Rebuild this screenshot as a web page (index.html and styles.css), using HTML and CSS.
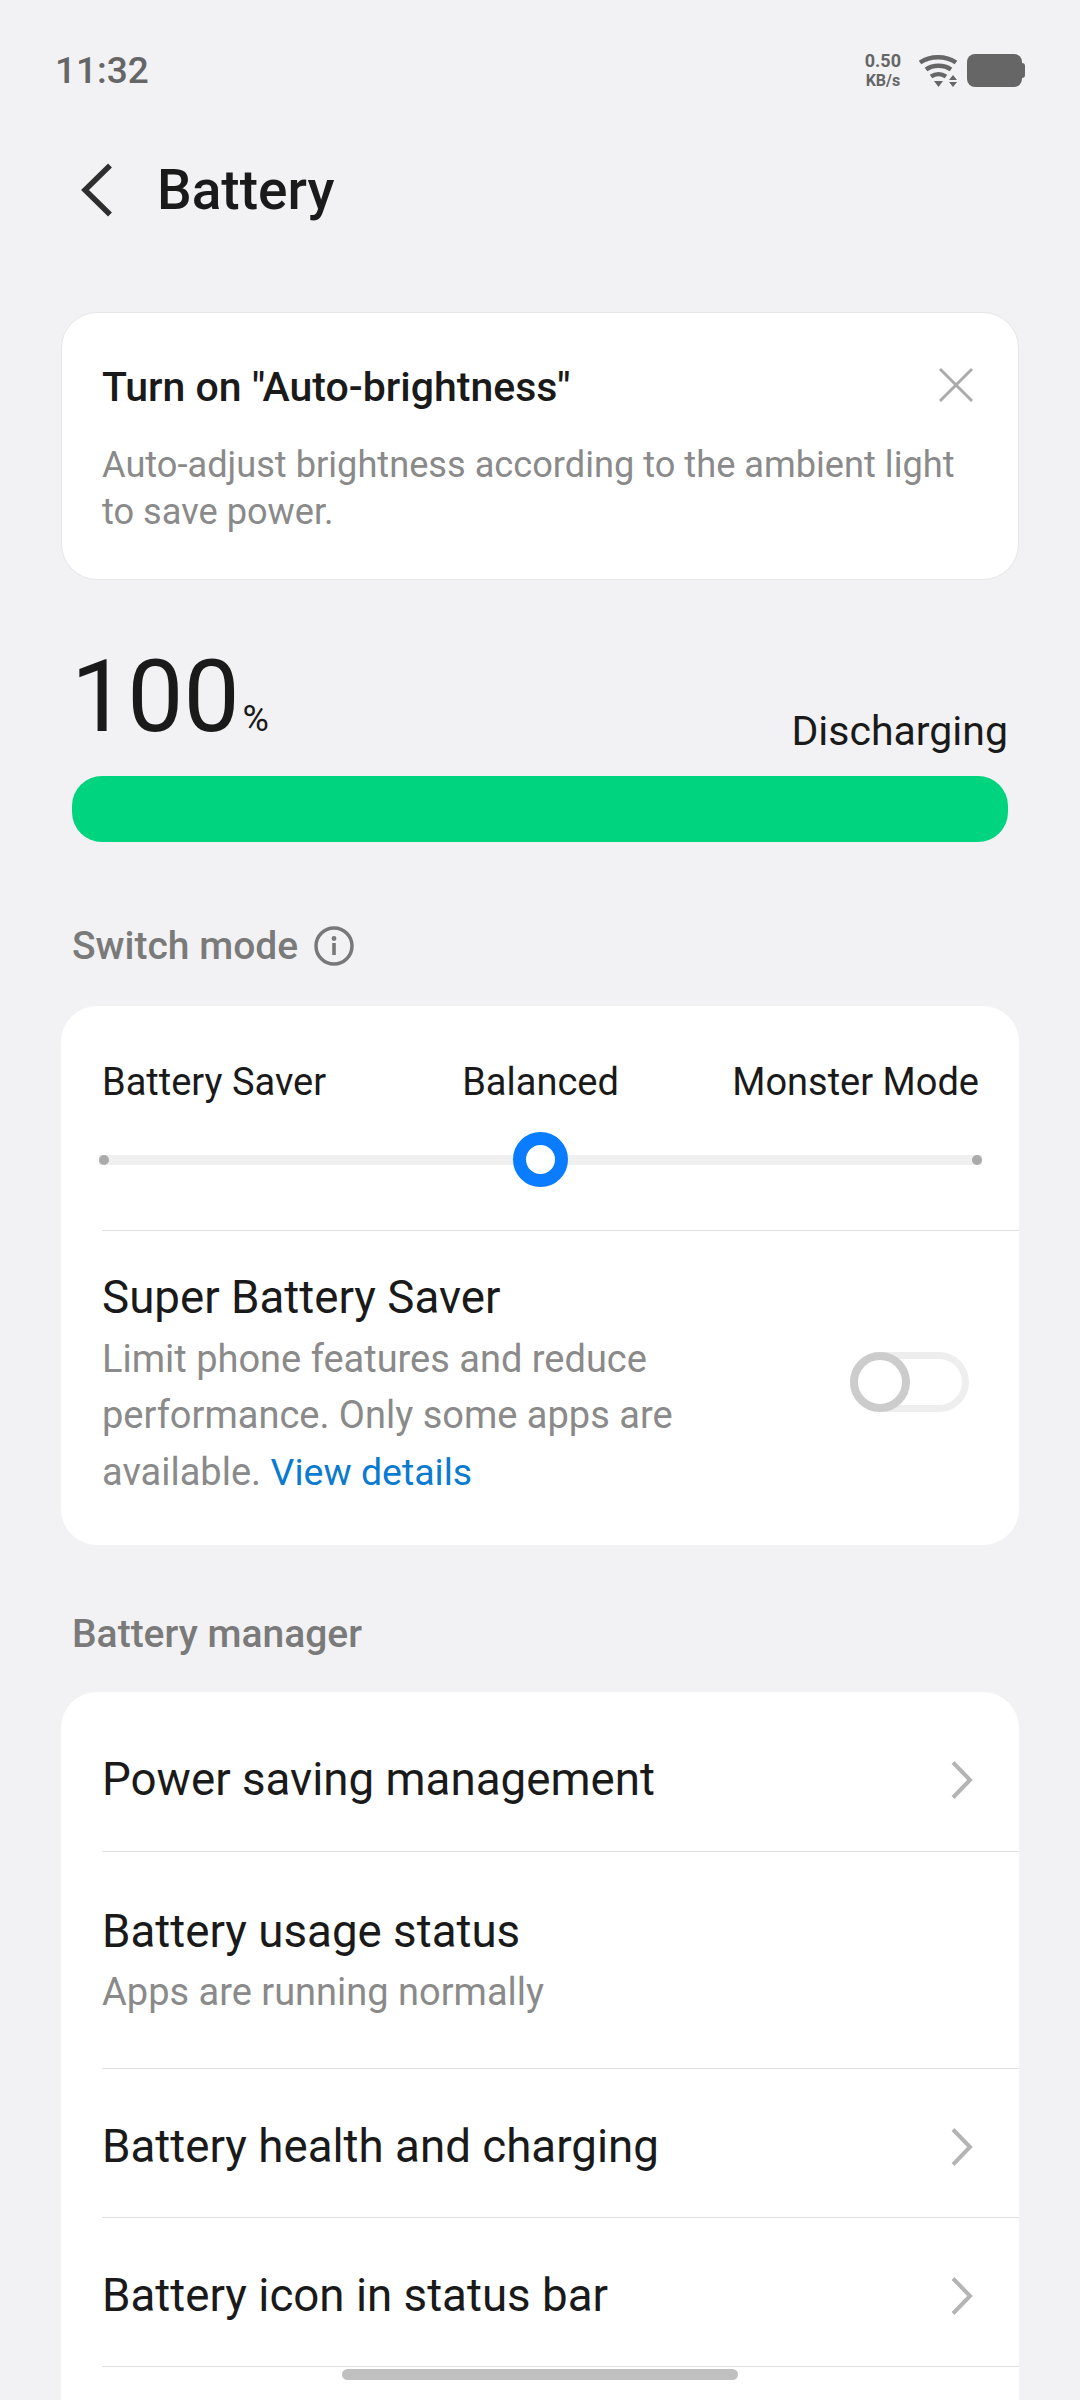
FILE: index.html
```html
<!DOCTYPE html>
<html lang="en">
<head>
  <meta charset="UTF-8">
  <title>Battery</title>
  <link rel="stylesheet" href="styles.css">
</head>
<body>
  <div class="status">
    <span class="time">11:32</span>
    <div class="status-icons">
      <div class="speed"><span>0.50</span><span class="unit">KB/s</span></div>
      <svg class="wifi" width="41" height="33" viewBox="0 0 41 33">
        <g fill="none" stroke="#666" stroke-width="4.4">
          <path d="M2 8.5C12 1.5 28 1.5 38 8.5"/>
          <path d="M8 15.5C15 10.5 26 10.5 33 15.5"/>
          <path d="M13 22.5C17.500 19.500 23.500 19.500 28 22.500"/>
        </g>
        <path d="M16 27H25L20.500 33Z" fill="#666"/>
        <path d="M31 26L35 21L39 26ZM31 28H39L35 33Z" fill="#666"/>
      </svg>
      <div class="batt"></div>
    </div>
  </div>

  <header class="title-bar">
    <svg width="32" height="54" viewBox="0 0 32 54">
      <path d="M29 2.500L4 27L29 51.500" fill="none" stroke="#2e2e2e" stroke-width="5.500"/>
    </svg>
    <h1>Battery</h1>
  </header>

  <main>
    <section class="notice">
      <div class="notice-head">
        <h2>Turn on "Auto-brightness"</h2>
        <svg width="36" height="36" viewBox="0 0 36 36">
          <path d="M2 2L34 34M34 2L2 34" stroke="#ababab" stroke-width="3" fill="none"/>
        </svg>
      </div>
      <p>Auto-adjust brightness according to the ambient light to save power.</p>
    </section>

    <section class="level">
      <div class="level-text">
        <div class="percent">100<span>%</span></div>
        <div class="state">Discharging</div>
      </div>
      <div class="level-bar"></div>
    </section>

    <h3 class="section-label first">Switch mode
      <svg width="40" height="40" viewBox="0 0 40 40">
        <circle cx="20" cy="20" r="18" fill="none" stroke="#787878" stroke-width="3.500"/>
        <circle cx="20" cy="12.500" r="2.400" fill="#787878"/>
        <rect x="18.200" y="17" width="3.600" height="12" fill="#787878"/>
      </svg>
    </h3>
    <section class="card">
      <div class="modes">
        <div class="mode-names">
          <span>Battery Saver</span>
          <span>Balanced</span>
          <span class="mode-last">Monster Mode</span>
        </div>
        <div class="slider">
          <i class="dot"></i>
          <i class="knob"></i>
          <i class="dot"></i>
        </div>
      </div>
      <div class="saver">
        <div class="saver-text">
          <div class="row-title">Super Battery Saver</div>
          <p>Limit phone features and reduce performance. Only some apps are available. <a href="#">View details</a></p>
        </div>
        <div class="toggle"><i></i></div>
      </div>
    </section>

    <h3 class="section-label">Battery manager</h3>
    <section class="card list">
      <div class="row row-first">
        <div class="row-title">Power saving management</div>
        <svg class="chev" width="22" height="38" viewBox="0 0 22 38"><path d="M2 1.500L19 19L2 36.500"/></svg>
      </div>
      <div class="row row-sub">
        <div class="row-title">Battery usage status</div>
        <div class="row-desc">Apps are running normally</div>
      </div>
      <div class="row">
        <div class="row-title">Battery health and charging</div>
        <svg class="chev" width="22" height="38" viewBox="0 0 22 38"><path d="M2 1.500L19 19L2 36.500"/></svg>
      </div>
      <div class="row">
        <div class="row-title">Battery icon in status bar</div>
        <svg class="chev" width="22" height="38" viewBox="0 0 22 38"><path d="M2 1.500L19 19L2 36.500"/></svg>
      </div>
    </section>
  </main>

  <div class="home-bar"></div>
</body>
</html>
```
FILE: styles.css
```css
html, body {
  margin: 0;
  padding: 0;
}
body {
  width: 1080px;
  height: 2400px;
  overflow: hidden;
  position: relative;
  background-color: #f2f2f4;
  color: #1a1a1a;
  font-family: Roboto, "Noto Sans", sans-serif;
}
h1, h2, h3, p {
  margin: 0;
  font-weight: normal;
}
.status {
  height: 140px;
  display: flex;
  align-items: center;
  justify-content: space-between;
  padding: 0 58px 0 55px;
  color: #666;
}
.time {
  font-size: 37px;
  font-weight: 500;
}
.status-icons {
  display: flex;
  align-items: center;
  margin-top: 1px;
}
.speed {
  display: flex;
  flex-direction: column;
  align-items: center;
  font-size: 18px;
  font-weight: 700;
  line-height: 20px;
  margin-right: 17px;
}
.speed .unit {
  font-size: 16px;
}
.wifi {
  margin-right: 8px;
}
.batt {
  width: 55px;
  height: 33px;
  background-color: #666;
  border-radius: 8px;
  position: relative;
}
.batt::after {
  content: "";
  position: absolute;
  right: -3px;
  top: 9px;
  width: 4px;
  height: 15px;
  background-color: #666;
  border-radius: 0 3px 3px 0;
}
.title-bar {
  height: 100px;
  display: flex;
  align-items: center;
  padding-left: 81px;
}
.title-bar h1 {
  font-size: 55px;
  font-weight: 500;
  margin-left: 44px;
}
main {
  padding: 72px 61px 0;
}
.notice {
  height: 268px;
  box-sizing: border-box;
  background-color: #fff;
  border: 1.5px solid #e6e6e8;
  border-radius: 36px;
  padding: 49px 40px 0;
}
.notice-head {
  display: flex;
  align-items: center;
  justify-content: space-between;
  height: 50px;
}
.notice-head h2 {
  font-size: 41px;
  font-weight: 500;
}
.notice-head svg {
  margin-top: -4px;
  margin-right: 4px;
}
.notice p {
  margin-top: 29px;
  font-size: 36.200px;
  line-height: 47px;
  color: #8a8a8a;
}
.level {
  padding: 0 11px;
}
.level-text {
  display: flex;
  justify-content: space-between;
  align-items: flex-end;
  height: 196px;
}
.percent {
  font-size: 100px;
  line-height: 120px;
  margin-left: -1px;
  margin-bottom: -3px;
}
.percent span {
  font-size: 36px;
  margin-left: 3px;
}
.state {
  font-size: 41px;
  line-height: 50px;
  margin-bottom: 20px;
}
.level-bar {
  height: 66px;
  background-color: #00d47e;
  border-radius: 30px;
}
.section-label {
  display: flex;
  align-items: center;
  gap: 16px;
  height: 50px;
  margin: 64px 0 33px 11px;
  font-size: 39px;
  font-weight: 500;
  color: #7a7a7a;
}
.section-label.first {
  margin: 79px 0 35px 11px;
}
.card {
  background-color: #fff;
  border-radius: 36px;
  overflow: hidden;
}
.modes {
  margin-left: 41px;
  padding: 0 40px 0 0;
  height: 224px;
  box-sizing: border-box;
}
.mode-names {
  display: grid;
  grid-template-columns: 1fr auto 1fr;
  padding-top: 52px;
  font-size: 38px;
  line-height: 48px;
}
.mode-last {
  text-align: right;
}
.slider {
  display: flex;
  justify-content: space-between;
  align-items: center;
  height: 55px;
  margin: 26px -3px 0;
  background: linear-gradient(#f0f0f0, #f0f0f0) center / 100% 10px no-repeat;
}
.slider .dot {
  width: 10px;
  height: 10px;
  border-radius: 50%;
  background-color: #aaa;
}
.slider .knob {
  width: 55px;
  height: 55px;
  box-sizing: border-box;
  border: 13px solid #0a7cff;
  border-radius: 50%;
  background-color: #fff;
}
.saver {
  margin-left: 41px;
  padding: 40px 50px 0 0;
  height: 315px;
  box-sizing: border-box;
  border-top: 1.5px solid #e2e2e2;
  display: flex;
  align-items: center;
  justify-content: space-between;
}
.saver-text {
  width: 640px;
  margin-top: -46px;
}
.saver-text p {
  margin-top: 5px;
  font-size: 38px;
  line-height: 56.500px;
  color: #8a8a8a;
}
.saver-text a {
  font-size: 37.500px;
  color: #0a7bd0;
  text-decoration: none;
}
.row-title {
  font-size: 45.700px;
  line-height: 56px;
}
.toggle {
  width: 119px;
  height: 60px;
  box-sizing: border-box;
  border: 7px solid #eeeeee;
  border-radius: 30px;
  position: relative;
  margin-top: -52px;
}
.toggle i {
  position: absolute;
  left: -7px;
  top: -7px;
  width: 60px;
  height: 60px;
  box-sizing: border-box;
  border: 8px solid #cccccc;
  border-radius: 50%;
  background-color: #fff;
}
.list {
  height: 760px;
  border-radius: 36px 36px 0 0;
}
.row {
  margin-left: 41px;
  height: 149px;
  box-sizing: border-box;
  padding: 8px 46px 0 0;
  border-bottom: 1.5px solid #e2e2e2;
  display: flex;
  align-items: center;
  justify-content: space-between;
}
.row-first {
  height: 160px;
  padding-top: 17px;
}
.row-sub {
  height: 217px;
  display: block;
  padding-top: 52px;
}
.row-desc {
  margin-top: 9px;
  font-size: 38px;
  line-height: 46px;
  color: #8a8a8a;
}
.chev path {
  fill: none;
  stroke: #b4b4b4;
  stroke-width: 4;
}
.home-bar {
  position: absolute;
  left: 342px;
  top: 2369px;
  width: 396px;
  height: 11px;
  border-radius: 6px;
  background-color: #c0c0c0;
}
```
